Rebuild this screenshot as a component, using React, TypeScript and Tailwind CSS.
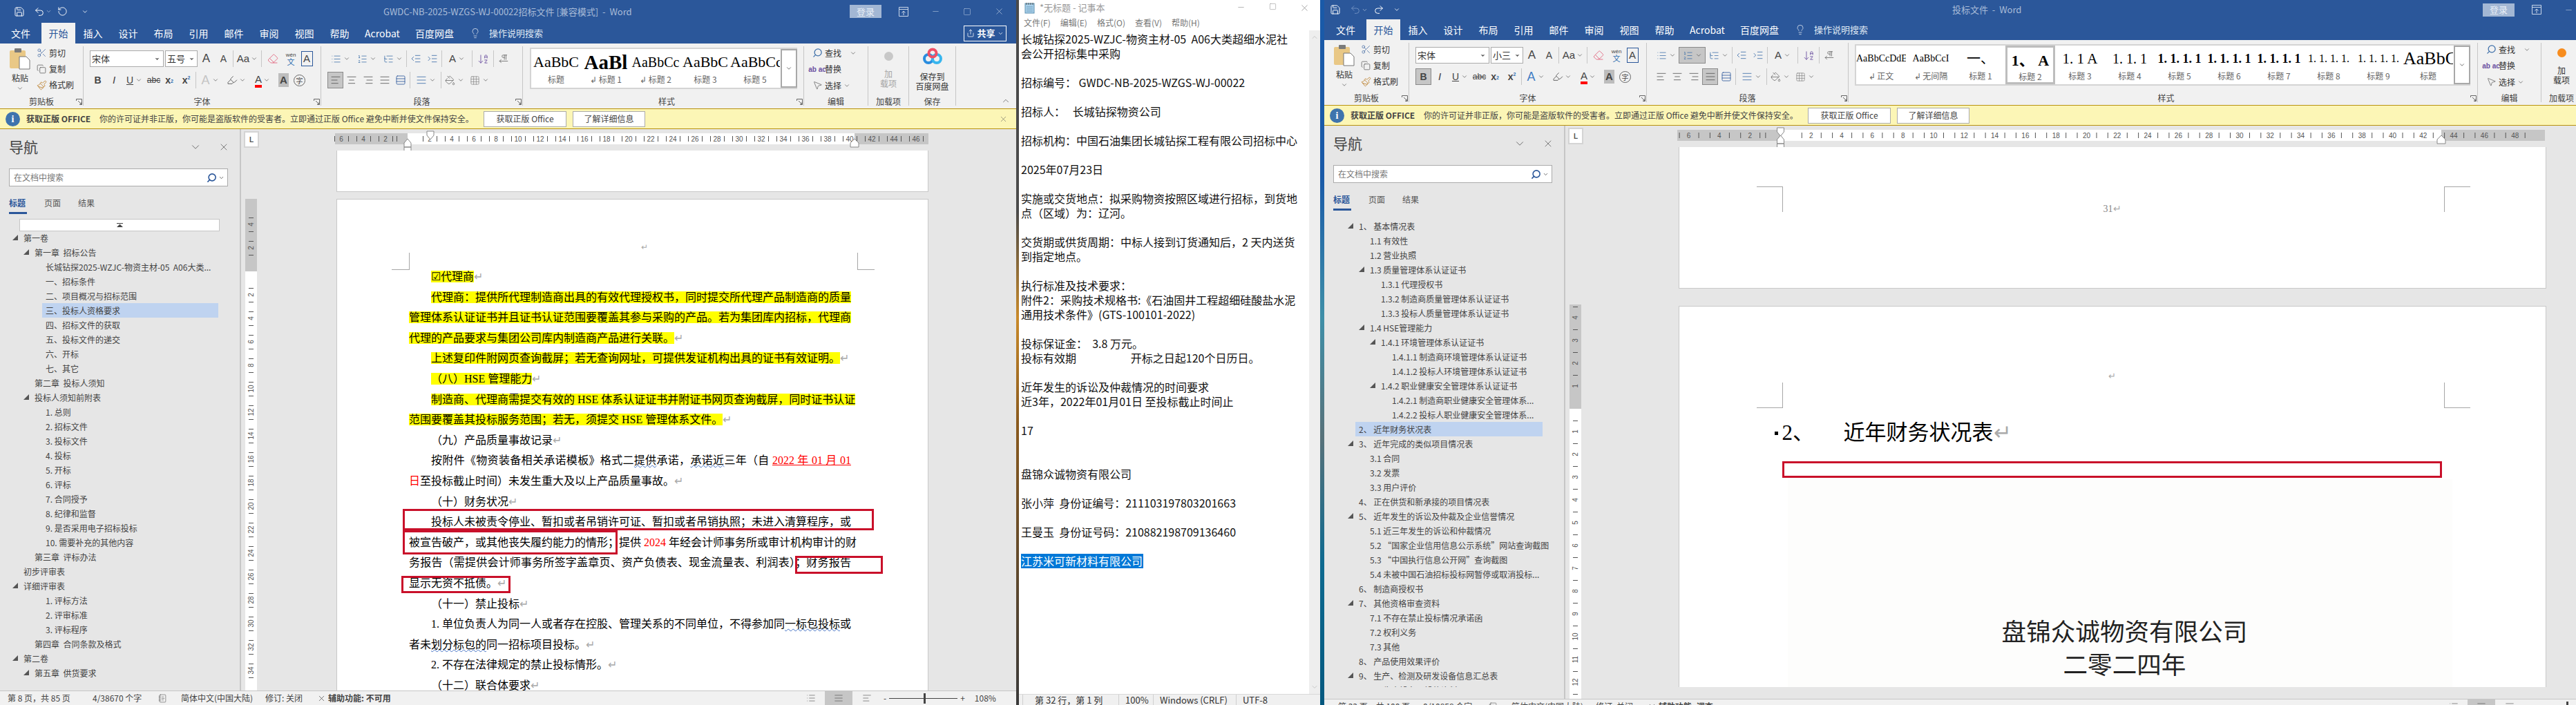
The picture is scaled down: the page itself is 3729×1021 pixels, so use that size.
import type { ReactNode } from "react";
import {
  AlignCenter,
  AlignJustify,
  AlignLeft,
  AlignRight,
  ArrowDownAZ,
  ChevronDown,
  ChevronUp,
  Copy,
  Eraser,
  Grid3x3,
  Highlighter,
  IndentDecrease,
  IndentIncrease,
  Lightbulb,
  List,
  ListOrdered,
  ListTree,
  Minus,
  MousePointer2,
  NotebookText,
  Paintbrush,
  PaintBucket,
  PilcrowLeft,
  Redo2,
  RotateCcw,
  Save,
  Scissors,
  Search,
  Share,
  Square,
  Undo2,
  Rows3,
  X,
} from "lucide-react";

const TABS = [
  ["文件", "w-[60px]"],
  ["开始", "w-[49px]"],
  ["插入", "w-[51px]"],
  ["设计", "w-[51px]"],
  ["布局", "w-[51px]"],
  ["引用", "w-[51px]"],
  ["邮件", "w-[51px]"],
  ["审阅", "w-[51px]"],
  ["视图", "w-[51px]"],
  ["帮助", "w-[51px]"],
  ["Acrobat", "w-[73px]"],
  ["百度网盘", "w-[78px]"],
];

type StyleItem = { preview: string; label: string; cls: string; active?: boolean };

const LEFT_STYLES: StyleItem[] = [
  { preview: "AaBbC", label: "标题", cls: "text-[22px]" },
  { preview: "AaBl", label: "↲ 标题 1", cls: "text-[29px] font-bold" },
  { preview: "AaBbCc", label: "↲ 标题 2", cls: "text-[20px]" },
  { preview: "AaBbC", label: "标题 3", cls: "text-[22px]" },
  { preview: "AaBbCc", label: "标题 5", cls: "text-[22px]" },
];

const RIGHT_STYLES: StyleItem[] = [
  { preview: "AaBbCcDdE", label: "↲ 正文", cls: "text-[14px]" },
  { preview: "AaBbCcI", label: "↲ 无间隔", cls: "text-[14px]" },
  { preview: "一、", label: "标题 1", cls: "text-[20px]" },
  { preview: "1、 A", label: "标题 2", cls: "text-[22px] font-bold", active: true },
  { preview: "1. 1  A", label: "标题 3", cls: "text-[21px]" },
  { preview: "1. 1. 1", label: "标题 4", cls: "text-[20px]" },
  { preview: "1. 1. 1. 1", label: "标题 5", cls: "text-[18px] font-bold" },
  { preview: "1. 1. 1. 1", label: "标题 6", cls: "text-[18px] font-bold" },
  { preview: "1. 1. 1. 1", label: "标题 7", cls: "text-[18px] font-bold" },
  { preview: "1. 1. 1. 1.", label: "标题 8", cls: "text-[16px]" },
  { preview: "1. 1. 1. 1.", label: "标题 9", cls: "text-[16px]" },
  { preview: "AaBbC", label: "标题", cls: "text-[26px]" },
];

type TreeRow = { text: string; level: 0 | 1 | 2 | 3 | 4; caret?: boolean; on?: boolean };

const LEFT_TREE: TreeRow[] = [
  { text: "第一卷", level: 0, caret: true },
  { text: "第一章  招标公告", level: 1, caret: true },
  { text: "长城钻探2025-WZJC-物资主材-05  A06大类...", level: 2 },
  { text: "一、招标条件", level: 2 },
  { text: "二、项目概况与招标范围", level: 2 },
  { text: "三、投标人资格要求", level: 2, on: true },
  { text: "四、招标文件的获取", level: 2 },
  { text: "五、投标文件的递交", level: 2 },
  { text: "六、开标", level: 2 },
  { text: "七、其它", level: 2 },
  { text: "第二章  投标人须知", level: 1 },
  { text: "投标人须知前附表", level: 1, caret: true },
  { text: "1. 总则", level: 2 },
  { text: "2. 招标文件", level: 2 },
  { text: "3. 投标文件", level: 2 },
  { text: "4. 投标", level: 2 },
  { text: "5. 开标", level: 2 },
  { text: "6. 评标", level: 2 },
  { text: "7. 合同授予", level: 2 },
  { text: "8. 纪律和监督", level: 2 },
  { text: "9. 是否采用电子招标投标", level: 2 },
  { text: "10. 需要补充的其他内容", level: 2 },
  { text: "第三章  评标办法", level: 1 },
  { text: "初步评审表", level: 0 },
  { text: "详细评审表", level: 0, caret: true },
  { text: "1. 评标方法", level: 2 },
  { text: "2. 评审标准", level: 2 },
  { text: "3. 评标程序", level: 2 },
  { text: "第四章  合同条款及格式", level: 1 },
  { text: "第二卷", level: 0, caret: true },
  { text: "第五章  供货要求", level: 1, caret: true },
];

const RIGHT_TREE: TreeRow[] = [
  { text: "1、 基本情况表", level: 1, caret: true },
  { text: "1.1 有效性", level: 2 },
  { text: "1.2 营业执照", level: 2 },
  { text: "1.3 质量管理体系认证证书", level: 2, caret: true },
  { text: "1.3.1 代理授权书", level: 3 },
  { text: "1.3.2 制造商质量管理体系认证证书", level: 3 },
  { text: "1.3.3 投标人质量管理体系认证证书", level: 3 },
  { text: "1.4 HSE管理能力", level: 2, caret: true },
  { text: "1.4.1 环境管理体系认证证书", level: 3, caret: true },
  { text: "1.4.1.1 制造商环境管理体系认证证书", level: 4 },
  { text: "1.4.1.2 投标人环境管理体系认证证书", level: 4 },
  { text: "1.4.2 职业健康安全管理体系认证证书", level: 3, caret: true },
  { text: "1.4.2.1 制造商职业健康安全管理体系...", level: 4 },
  { text: "1.4.2.2 投标人职业健康安全管理体系...", level: 4 },
  { text: "2、 近年财务状况表", level: 1, on: true },
  { text: "3、 近年完成的类似项目情况表", level: 1, caret: true },
  { text: "3.1 合同", level: 2 },
  { text: "3.2 发票", level: 2 },
  { text: "3.3 用户评价", level: 2 },
  { text: "4、 正在供货和新承接的项目情况表", level: 1 },
  { text: "5、 近年发生的诉讼及仲裁及企业信誉情况", level: 1, caret: true },
  { text: "5.1 近三年发生的诉讼和仲裁情况", level: 2 },
  { text: "5.2 “国家企业信用信息公示系统”网站查询截图", level: 2 },
  { text: "5.3 “中国执行信息公开网”查询截图", level: 2 },
  { text: "5.4 未被中国石油招标投标网暂停或取消投标...", level: 2 },
  { text: "6、 制造商授权书", level: 1 },
  { text: "7、 其他资格审查资料", level: 1, caret: true },
  { text: "7.1 不存在禁止投标情况承诺函", level: 2 },
  { text: "7.2 权利义务", level: 2 },
  { text: "7.3 其他", level: 2 },
  { text: "8、 产品使用效果评价", level: 1 },
  { text: "9、 生产、检测及研发设备信息汇总表", level: 1, caret: true },
  { text: "9.1 生产设备、设施资料", level: 2 },
];

const LEVEL_WIDTH = ["w-[29px]", "w-[45px]", "w-[61px]", "w-[77px]", "w-[93px]"];

const NOTEPAD_LINES = [
  "长城钻探2025-WZJC-物资主材-05  A06大类超细水泥社",
  "会公开招标集中采购",
  "",
  "招标编号： GWDC-NB-2025-WZGS-WJ-00022",
  "",
  "招标人：   长城钻探物资公司",
  "",
  "招标机构：中国石油集团长城钻探工程有限公司招标中心",
  "",
  "2025年07月23日",
  "",
  "实施或交货地点：拟采购物资按照区域进行招标，到货地",
  "点（区域）为：辽河。",
  "",
  "交货期或供货周期：中标人接到订货通知后，2 天内送货",
  "到指定地点。",
  "",
  "执行标准及技术要求：",
  "附件2：采购技术规格书:《石油固井工程超细硅酸盐水泥",
  "通用技术条件》(GTS-100101-2022)",
  "",
  "投标保证金：  3.8 万元。",
  "投标有效期                      开标之日起120个日历日。",
  "",
  "近年发生的诉讼及仲裁情况的时间要求",
  "近3年，2022年01月01日 至投标截止时间止",
  "",
  "17",
  "",
  "",
  "盘锦众诚物资有限公司",
  "",
  "张小萍  身份证编号：211103197803201663",
  "",
  "王曼玉  身份证号码：210882198709136460",
  "",
];

function Cell({ className = "", children }: { className?: string; children?: ReactNode }) {
  return <div className={`flex h-full shrink-0 items-center justify-center ${className}`}>{children}</div>;
}

function Chev() {
  return <ChevronDown size={10} strokeWidth={1.5} className="shrink-0 text-[#444]" />;
}

function Sep() {
  return <div className="mx-[1px] h-[24px] w-px shrink-0 bg-[#c6c6c6]" />;
}

function Launcher() {
  return (
    <svg width="9" height="9" viewBox="0 0 9 9" className="absolute right-[1px] bottom-[1px] text-[#666]">
      <path d="M0.5 3V0.5H8.5V8.5H5.5M3 3L8 8M8 5V8H5" fill="none" stroke="currentColor" />
    </svg>
  );
}

function Group({
  label,
  className,
  children,
  launcher = false,
}: {
  label: string;
  className: string;
  children: ReactNode;
  launcher?: boolean;
}) {
  return (
    <div className={`relative flex h-full shrink-0 flex-col border-r border-[#c6c6c6] ${className}`}>
      <div className="h-[70px] shrink-0">{children}</div>
      <div className="h-[16px] text-center text-[12px] leading-[20px] text-[#444]">{label}</div>
      {launcher && <Launcher />}
    </div>
  );
}

function SmallRow({ icon, text, after }: { icon: ReactNode; text: string; after?: ReactNode }) {
  return (
    <div className="flex h-[23.5px] items-center text-[12px] whitespace-nowrap text-[#333]">
      <Cell className="w-[18px]">{icon}</Cell>
      <span className="ml-[2px]">{text}</span>
      {after}
    </div>
  );
}

function PasteIcon() {
  return (
    <svg width="30" height="32" viewBox="0 0 30 32">
      <rect x="0" y="4" width="23" height="26" rx="2" fill="#e9c886" />
      <rect x="7" y="1" width="10" height="6" rx="1" fill="#7a7a7a" />
      <path d="M14 13H24L29 18V31H14Z" fill="#fff" stroke="#777" />
    </svg>
  );
}

function BaiduIcon() {
  return (
    <svg width="28" height="26" viewBox="0 0 28 26" fill="none">
      <circle cx="8" cy="16" r="6" stroke="#2a8ddf" strokeWidth="4" />
      <circle cx="20" cy="16" r="6" stroke="#38b6ee" strokeWidth="4" />
      <circle cx="14" cy="8" r="5.5" stroke="#ef4f66" strokeWidth="4" />
    </svg>
  );
}

function RibbonDisplayIcon() {
  return (
    <svg width="14" height="14" viewBox="0 0 14 14" fill="none" stroke="currentColor">
      <path d="M0.5 0.5H13.5V13.5H0.5ZM0.5 3.5H13.5M7 12V6M4.5 8.5L7 6L9.5 8.5" />
    </svg>
  );
}

function Ribbon({ right }: { right: boolean }) {
  const letter = "[font-family:'Liberation_Sans',sans-serif] text-[#444]";
  const smallIcon = "text-[#555]";
  const styles = right ? RIGHT_STYLES : LEFT_STYLES;
  return (
    <div className="flex h-[94px] shrink-0 bg-[#f1f1f1] py-[4px]">
      <Group label="剪贴板" className={right ? "w-[123px]" : "w-[121px]"} launcher>
        <div className="-mt-[2px] flex h-full">
          <div className="ml-[13px] flex w-[32px] shrink-0 flex-col items-center pt-[4px] text-[12px] text-[#333]">
            <PasteIcon />
            <span className="mt-[3px]">粘贴</span>
            <span className="mt-[1px]">
              <Chev />
            </span>
          </div>
          <div className="ml-[6px] flex flex-col">
            <SmallRow icon={<Scissors size={15} strokeWidth={1.25} className="text-[#4a6fa5]" />} text="剪切" />
            <SmallRow icon={<Copy size={14} strokeWidth={1.25} className={smallIcon} />} text="复制" />
            <SmallRow icon={<Paintbrush size={15} strokeWidth={1.5} className="text-[#c08a3e]" />} text="格式刷" />
          </div>
        </div>
      </Group>

      <Group label="字体" className="w-[344px]" launcher>
        <div className="flex flex-col gap-[7px] pt-[6px]">
          <div className="flex h-[24px] items-center pl-[9px]">
            <div className="flex h-[24px] w-[107px] shrink-0 items-center justify-between border border-[#ababab] bg-white px-[2px] text-[13px] text-[#333]">
              宋体
              <ChevronDown size={9} className="mr-[2px] fill-[#555] text-[#555]" />
            </div>
            <div className="ml-[2px] flex h-[24px] w-[47px] shrink-0 items-center justify-between border border-[#ababab] bg-white px-[2px] text-[13px] text-[#333]">
              {right ? "小三" : "五号"}
              <ChevronDown size={9} className="mr-[1px] fill-[#555] text-[#555]" />
            </div>
            <Cell className={`w-[25px] text-[17px] ${letter}`}>A</Cell>
            <Cell className={`w-[25px] text-[14px] ${letter}`}>A</Cell>
            <Sep />
            <Cell className={`w-[38px] gap-[2px] text-[15px] ${letter}`}>
              Aa
              <Chev />
            </Cell>
            <Sep />
            <Cell className="w-[30px]">
              <Eraser size={16} strokeWidth={1.5} className="text-[#e4738a]" />
            </Cell>
            <Cell className="w-[22px] flex-col text-[8px] leading-[9px] text-[#444]">
              <span className="[font-family:'Liberation_Sans',sans-serif]">wén</span>
              <span className="text-[11px] leading-[11px] text-[#2f6fb0]">文</span>
            </Cell>
            <Cell className="w-[24px]">
              <span className={`flex h-[22px] w-[17px] items-center justify-center border border-[#2b579a] text-[15px] ${letter}`}>A</span>
            </Cell>
          </div>
          <div className="flex h-[24px] items-center pl-[9px]">
            <div className={`flex h-[24px] w-[23px] shrink-0 items-center justify-center text-[14px] font-bold ${letter} ${right ? "border border-[#8a8a8a] bg-[#c6c6c6]" : ""}`}>
              B
            </div>
            <Cell className={`w-[24px] text-[15px] italic ${letter}`}>I</Cell>
            <Cell className={`w-[35px] gap-[3px] text-[14px] underline ${letter}`}>
              U
              <Chev />
            </Cell>
            <Cell className={`w-[21px] text-[12px] line-through ${letter}`}>abc</Cell>
            <Cell className={`w-[24px] text-[14px] font-bold ${letter}`}>
              x<sub className="text-[7px] text-[#2f6fb0]">2</sub>
            </Cell>
            <Cell className={`w-[25px] text-[14px] font-bold ${letter}`}>
              x<sup className="text-[7px] text-[#2f6fb0]">2</sup>
            </Cell>
            <Sep />
            <Cell className={`w-[38px] gap-[3px] text-[18px] ${right ? "text-[#3f7cc4]" : "text-[#c4c4c4]"} [font-family:'Liberation_Sans',sans-serif]`}>
              A
              <Chev />
            </Cell>
            <Cell className="w-[38px] gap-[2px]">
              <Highlighter size={16} strokeWidth={1.5} className="text-[#666]" />
              <Chev />
            </Cell>
            <Cell className="w-[38px] gap-[2px]">
              <span className={`border-b-[4px] border-[#f00] text-[15px] leading-[17px] ${letter}`}>A</span>
              <Chev />
            </Cell>
            <Cell className="w-[23px]">
              <span className={`flex h-[20px] w-[15px] items-center justify-center bg-[#bdbdbd] text-[15px] font-bold ${letter}`}>A</span>
            </Cell>
            <Cell className="w-[23px]">
              <span className="flex h-[17px] w-[17px] items-center justify-center rounded-full border border-[#666] text-[10px] text-[#444]">字</span>
            </Cell>
          </div>
        </div>
      </Group>

      <Group label="段落" className="w-[292px]" launcher>
        <div className="flex flex-col gap-[7px] pt-[6px]">
          <div className="flex h-[24px] items-center pl-[9px]">
            <Cell className="w-[37px] gap-[3px]">
              <List size={15} strokeWidth={1.25} className="text-[#3c6ea8]" />
              <Chev />
            </Cell>
            <Cell className={`w-[39px] gap-[3px] ${right ? "border border-[#8a8a8a] bg-[#c6c6c6]" : ""}`}>
              <ListOrdered size={15} strokeWidth={1.25} className="text-[#3c6ea8]" />
              <Chev />
            </Cell>
            <Cell className="w-[37px] gap-[3px]">
              <ListTree size={15} strokeWidth={1.25} className="text-[#3c6ea8]" />
              <Chev />
            </Cell>
            <Sep />
            <Cell className="w-[24px]">
              <IndentDecrease size={16} strokeWidth={1.25} className="text-[#3c6ea8]" />
            </Cell>
            <Cell className="w-[24px]">
              <IndentIncrease size={16} strokeWidth={1.25} className="text-[#3c6ea8]" />
            </Cell>
            <Sep />
            <Cell className={`w-[41px] gap-[3px] text-[15px] ${letter}`}>
              A
              <Chev />
            </Cell>
            <Sep />
            <Cell className="w-[28px]">
              <ArrowDownAZ size={17} strokeWidth={1.25} className="text-[#6a4fa0]" />
            </Cell>
            <Sep />
            <Cell className="w-[26px]">
              <PilcrowLeft size={14} strokeWidth={1.25} className="text-[#555]" />
            </Cell>
          </div>
          <div className="flex h-[24px] items-center pl-[9px]">
            <Cell className={`w-[23px] ${right ? "" : "border border-[#8a8a8a] bg-[#c6c6c6]"}`}>
              <AlignLeft size={16} strokeWidth={1.25} className="text-[#555]" />
            </Cell>
            <Cell className="w-[24px]">
              <AlignCenter size={16} strokeWidth={1.25} className="text-[#555]" />
            </Cell>
            <Cell className="w-[24px]">
              <AlignRight size={16} strokeWidth={1.25} className="text-[#555]" />
            </Cell>
            <Cell className={`w-[23px] ${right ? "border border-[#8a8a8a] bg-[#c6c6c6]" : ""}`}>
              <AlignJustify size={16} strokeWidth={1.25} className="text-[#555]" />
            </Cell>
            <Cell className="w-[24px]">
              <Rows3 size={16} strokeWidth={1.25} className="text-[#2b579a]" />
            </Cell>
            <Sep />
            <Cell className="w-[42px] gap-[3px]">
              <AlignJustify size={16} strokeWidth={1.25} className="text-[#3c6ea8]" />
              <Chev />
            </Cell>
            <Sep />
            <Cell className="w-[36px] gap-[3px]">
              <PaintBucket size={15} strokeWidth={1.25} className="text-[#666]" />
              <Chev />
            </Cell>
            <Cell className="w-[36px] gap-[3px]">
              <Grid3x3 size={15} strokeWidth={1} className="text-[#777]" />
              <Chev />
            </Cell>
          </div>
        </div>
      </Group>

      <Group label="样式" className={right ? "w-[911px] pl-[9px]" : "w-[407px] pl-[10px]"} launcher>
        <div className={`mt-[2px] flex h-[60px] border-y-2 border-l-2 border-[#d4d4d4] bg-white ${right ? "w-[891px]" : "w-[387px]"}`}>
          {styles.map((s) => (
            <div
              key={s.label}
              className={`flex h-full w-[72px] shrink-0 flex-col items-center overflow-hidden pt-[5px] ${s.active ? "border-[3px] border-[#bdbdbd]" : ""}`}
            >
              <div className={`h-[28px] w-full overflow-hidden text-center leading-[28px] whitespace-nowrap text-black [font-family:'Liberation_Serif','Noto_Sans_CJK_SC',serif] ${s.cls}`}>
                {s.preview}
              </div>
              <div className="mt-[3px] text-[12px] leading-[16px] whitespace-nowrap text-[#666]">{s.label}</div>
            </div>
          ))}
          <div className="ml-auto flex w-[24px] shrink-0 items-center justify-center border-2 border-[#a8a8a8] text-[#555]">
            <ChevronDown size={10} />
          </div>
        </div>
      </Group>

      <Group label="编辑" className={right ? "w-[92px]" : "w-[93px]"}>
        <div className="-mt-[2px] flex flex-col pl-[10px]">
          <SmallRow
            icon={<Search size={15} strokeWidth={2} className="-scale-x-100 text-[#3c6ea8]" />}
            text="查找"
            after={
              <span className="ml-[12px]">
                <Chev />
              </span>
            }
          />
          <SmallRow
            icon={<span className="text-[10px] leading-[9px] font-bold text-[#6a4fa0] [font-family:'Liberation_Sans',sans-serif]">ab ac</span>}
            text="替换"
          />
          <SmallRow
            icon={<MousePointer2 size={15} strokeWidth={1.25} className="text-[#666]" />}
            text="选择"
            after={
              <span className="ml-[3px]">
                <Chev />
              </span>
            }
          />
        </div>
      </Group>

      <Group label="加载项" className="w-[59px]">
        <div className={`flex flex-col items-center pt-[8px] text-[12px] leading-[14px] ${right ? "text-[#333]" : "text-[#a6a6a6]"}`}>
          <div className={`h-[13px] w-[13px] rounded-full ${right ? "bg-[#f78c1e]" : "bg-[#c8c8c8]"}`} />
          <span className="mt-[12px]">加</span>
          <span>载项</span>
        </div>
      </Group>

      <Group label="保存" className="w-[68px]">
        <div className="flex flex-col items-center pt-[2px] text-[12px] leading-[14px] text-[#333]">
          <BaiduIcon />
          <span className="mt-[9px]">保存到</span>
          <span>百度网盘</span>
        </div>
      </Group>

      <div className="flex flex-1 items-end justify-end pr-[8px] text-[#555]">
        <ChevronUp size={14} strokeWidth={1.25} />
      </div>
    </div>
  );
}

function TitleBar({ right, title }: { right: boolean; title: string }) {
  return (
    <div className={`flex shrink-0 items-center text-white ${right ? "h-[28px]" : "h-[33px]"}`}>
      <div className={`flex w-[140px] shrink-0 items-center ${right ? "pl-[8px]" : "pl-[20px]"}`}>
        <Save size={16} strokeWidth={1.5} />
        <Undo2 size={16} strokeWidth={1.5} className={`ml-[13px] ${right ? "text-[#6f8fc0]" : ""}`} />
        <ChevronDown size={9} className="ml-[1px] text-[#a9bcd8]" />
        {right ? <Redo2 size={16} strokeWidth={1.5} className="ml-[8px]" /> : <RotateCcw size={15} strokeWidth={1.5} className="ml-[8px]" />}
        <ChevronDown size={10} strokeWidth={2} className={right ? "ml-[13px]" : "ml-[20px]"} />
      </div>
      <div className={`flex-1 text-[13px] whitespace-pre text-[#a9bcd8] ${right ? "pl-[769px]" : "pl-[415px]"}`}>{title}</div>
      <div className="flex w-[241px] shrink-0 items-center text-[#c9d6e8]">
        <div className="flex h-[19px] w-[46px] items-center justify-center bg-[#a3b7d4] text-[13px] text-[#e9eff7]">登录</div>
        <Cell className="ml-[9px] w-[46px]">
          <RibbonDisplayIcon />
        </Cell>
        <Cell className="w-[46px]">
          <Minus size={13} strokeWidth={1} />
        </Cell>
        <Cell className="w-[46px]">
          <Square size={12} strokeWidth={1} />
        </Cell>
        <Cell className="w-[46px]">
          <X size={15} strokeWidth={1} />
        </Cell>
      </div>
    </div>
  );
}

function TabRow({ right }: { right: boolean }) {
  return (
    <div className={`flex h-[30px] shrink-0 items-center text-[14px] text-white ${right ? "pl-[1px]" : ""}`}>
      {TABS.map(([name, width]) => (
        <div
          key={name}
          className={`flex h-full shrink-0 items-center justify-center ${width} ${name === "开始" ? "bg-[#f1f1f1] text-[#2b579a]" : ""}`}
        >
          {name}
        </div>
      ))}
      <Lightbulb size={16} strokeWidth={1} className="ml-[12px] shrink-0" />
      <span className="ml-[12px] text-[13px] whitespace-nowrap text-[#dfe7f2]">操作说明搜索</span>
      {!right && (
        <div className="ml-auto mr-[14px] flex h-[23px] w-[62px] items-center justify-center gap-[3px] border border-white text-[13px] font-bold">
          <Share size={12} strokeWidth={1.5} />
          共享
          <ChevronDown size={9} />
        </div>
      )}
    </div>
  );
}

function LicenseBar() {
  return (
    <div className="flex h-[30px] shrink-0 items-center border-y border-[#b8920f] bg-[#fcf6b6] pl-[8px] text-[12px] text-[#444]">
      <div className="flex h-[21px] w-[21px] shrink-0 items-center justify-center rounded-full bg-[#3f74ad] text-[14px] font-bold text-white [font-family:'Liberation_Serif',serif]">
        i
      </div>
      <div className="ml-[9px] w-[96px] shrink-0 font-bold whitespace-nowrap">获取正版 OFFICE</div>
      <div className="ml-[10px] w-[540px] shrink-0 whitespace-nowrap">你的许可证并非正版，你可能是盗版软件的受害者。立即通过正版 Office 避免中断并使文件保持安全。</div>
      <div className="ml-[16px] flex h-[23px] w-[120px] shrink-0 items-center justify-center border border-[#ababab] bg-white">获取正版 Office</div>
      <div className="ml-[9px] flex h-[23px] w-[105px] shrink-0 items-center justify-center border border-[#ababab] bg-white">了解详细信息</div>
      <div className="ml-auto mr-[12px] text-[#555]">
        <X size={13} strokeWidth={1} />
      </div>
    </div>
  );
}

function NavPane({ tree, right }: { tree: TreeRow[]; right: boolean }) {
  return (
    <div className={`flex w-[349px] shrink-0 flex-col overflow-hidden border-r-2 border-[#c6c6c6] ${right ? "pb-[17px]" : ""}`}>
      <div className="flex h-[46px] shrink-0 items-center pt-[6px] pl-[13px] text-[#444]">
        <span className="text-[21px]">导航</span>
        <ChevronDown size={18} strokeWidth={1} className="ml-[219px]" />
        <X size={16} strokeWidth={1} className="ml-[24px]" />
      </div>
      <div className="mt-[11px] ml-[13px] flex h-[26px] w-[317px] shrink-0 items-center border border-[#ababab] bg-white pr-[4px] pl-[6px] text-[12px] text-[#777]">
        在文档中搜索
        <Search size={15} strokeWidth={2.5} className="ml-auto -scale-x-100 text-[#2b579a]" />
        <ChevronDown size={9} className="ml-[2px] text-[#444]" />
      </div>
      <div className="mt-[9px] ml-[13px] flex h-[31px] shrink-0 items-start gap-[25px] text-[12px] leading-[30px] text-[#555]">
        <span className="h-[31px] w-[26px] border-b-[3px] border-[#2b579a] font-bold text-[#2b579a]">标题</span>
        <span>页面</span>
        <span>结果</span>
      </div>
      {right ? (
        <div className="h-[11.5px] shrink-0" />
      ) : (
        <div className="mt-[7px] ml-[28px] flex h-[18px] w-[290px] shrink-0 items-center justify-center border border-[#c6c6c6] bg-white">
          <svg width="9" height="6" viewBox="0 0 9 6">
            <path d="M0 0H9V1H0ZM4.5 1.5L9 6H0Z" fill="#444" />
          </svg>
        </div>
      )}
      <div className={`flex-1 overflow-hidden text-[12px] leading-[21px] text-[#444] ${right ? "" : "-mt-[1.5px]"}`}>
        {tree.map((row) => (
          <div key={row.text} className="flex h-[21px] whitespace-pre">
            <div className={`flex shrink-0 items-center justify-end pr-[3px] ${LEVEL_WIDTH[row.level]}`}>
              {row.caret && (
                <svg width="8" height="8" viewBox="0 0 8 8">
                  <path d="M8 0V8H0Z" fill="#555" />
                </svg>
              )}
            </div>
            <div className={`mr-[31px] flex-1 pl-[5px] ${row.on ? "bg-[#bfd3f0]" : ""}`}>{row.text}</div>
          </div>
        ))}
      </div>
    </div>
  );
}

function HRuler({
  zero,
  step,
  tick,
  white,
  total,
  labels,
  first,
}: {
  zero: number;
  step: number;
  tick: number;
  white: number;
  total: number;
  labels: number;
  first: number;
}) {
  const marks: { x: number; text: number }[] = [];
  for (let i = -3; i <= labels; i++) {
    if (i !== 0) marks.push({ x: zero + i * step, text: Math.abs(i) * 2 });
  }
  return (
    <svg width={total} height="26" viewBox={`0 0 ${total} 26`} className="block shrink-0 overflow-visible">
      <rect width={total} height="16" fill="#c6c6c6" />
      <rect x={zero} width={white - zero} height="16" fill="#fff" />
      {marks.map((m) => (
        <g key={m.x} fill="#555">
          <rect x={m.x - tick} y="4" width="1" height="8" />
          <rect x={m.x + tick} y="4" width="1" height="8" />
          <text x={m.x} y="12" fontSize="10" textAnchor="middle" fontFamily="Liberation Sans">
            {m.text}
          </text>
        </g>
      ))}
      <rect x={zero - step / 2} y="4" width="1" height="8" fill="#555" />
      <path d={`M${first - 5} -3H${first + 5}V3L${first} 9L${first - 5} 3Z`} fill="#fff" stroke="#888" />
      <path d={`M${zero} 8L${zero + 5} 14V20H${zero - 5}V14ZM${zero - 5} 20H${zero + 5}V26H${zero - 5}Z`} fill="#fff" stroke="#888" />
      <path d={`M${white} 8L${white + 6} 14V20H${white - 6}V14Z`} fill="#fff" stroke="#888" />
    </svg>
  );
}

function VRuler({
  zero,
  step,
  inc,
  above,
  below,
  ticks,
  height,
}: {
  zero: number;
  step: number;
  inc: number;
  above: number;
  below: number;
  ticks: number[];
  height: number;
}) {
  const marks: { y: number; text: number }[] = [];
  for (let i = -above; i <= below; i++) {
    if (i !== 0) marks.push({ y: zero + i * step, text: Math.abs(i) * inc });
  }
  return (
    <svg width="17" height={height} viewBox={`0 0 17 ${height}`} className="block">
      <rect width="17" height={height} fill="#fff" />
      <rect width="17" height={zero} fill="#c6c6c6" />
      {marks.map((m) => (
        <g key={m.y} fill="#555">
          {ticks.map((t) => (
            <rect key={t} x="5" y={m.y + t} width="7" height="1" />
          ))}
          <text x="8.5" y={m.y + 3.5} fontSize="10" textAnchor="middle" fontFamily="Liberation Sans" transform={`rotate(-90 8.5 ${m.y})`}>
            {m.text}
          </text>
        </g>
      ))}
    </svg>
  );
}

function Mark({ className }: { className: string }) {
  return <div className={`absolute border-[#a6a6a6] ${className}`} />;
}

function RedBox({ className }: { className: string }) {
  return <div className={`absolute border-[3.5px] border-[#c9102a] ${className}`} />;
}

const RET = <span className="text-[#aaa]">↵</span>;

function Line({ indent, full, mark, children }: { indent?: boolean; full?: boolean; mark?: boolean; children: ReactNode }) {
  return (
    <p className={`h-[29.6px] w-[640px] leading-[29.6px] whitespace-nowrap ${indent ? "pl-[32px]" : ""} ${full ? "[text-align-last:justify]" : ""}`}>
      {children}
      {mark && RET}
    </p>
  );
}

function Hl({ children }: { children: ReactNode }) {
  return <span className="bg-[#ffff00]">{children}</span>;
}

function Wavy({ children }: { children: ReactNode }) {
  return <span className="underline decoration-[#4472c4] decoration-wavy decoration-1">{children}</span>;
}

function Red({ children, u }: { children: ReactNode; u?: boolean }) {
  return <span className={`text-[#f00] ${u ? "underline" : ""}`}>{children}</span>;
}

function LeftPages() {
  return (
    <div className="ml-[2px] flex-1 overflow-hidden">
      <div className="h-[60px] w-[857px] border-x border-b border-[#c8c8c8] bg-white" />
      <div className="relative mt-[10px] h-[800px] w-[857px] border border-[#c8c8c8] bg-white pt-[97px] pl-[104px] text-[16px] text-black [font-family:'Liberation_Serif','Noto_Sans_CJK_SC',serif]">
        <Mark className="top-[77px] left-[79px] h-[25px] w-[26px] border-r border-b" />
        <Mark className="top-[77px] left-[753px] h-[25px] w-[25px] border-b border-l" />
        <div className="absolute top-[60px] left-[440px] text-[12px]">{RET}</div>
        <Line indent mark><Hl>☑代理商</Hl></Line>
        <Line indent full><Hl>代理商：提供所代理制造商出具的有效代理授权书，同时提交所代理产品制造商的质量</Hl></Line>
        <Line full><Hl>管理体系认证证书并且证书认证范围要覆盖其参与采购的产品。若为集团库内招标，代理商</Hl></Line>
        <Line mark><Hl>代理的产品要求与集团公司库内制造商产品进行关联。</Hl></Line>
        <Line indent mark><Hl>上述复印件附网页查询截屏；若无查询网址，可提供发证机构出具的证书有效证明。</Hl></Line>
        <Line indent mark><Hl>（八）HSE 管理能力</Hl></Line>
        <Line indent full><Hl>制造商、代理商需提交有效的 HSE 体系认证证书并附证书网页查询截屏，同时证书认证</Hl></Line>
        <Line mark><Hl>范围要覆盖其投标服务范围；若无，须提交 HSE 管理体系文件。</Hl></Line>
        <Line indent mark>（九）产品质量事故记录</Line>
        <Line indent full>
          按附件《物资装备相关承诺模板》格式二<Wavy>提供</Wavy>承诺，<Wavy>承诺近</Wavy>三年（自 <Red u>2022 年 01 月 01</Red>
        </Line>
        <Line mark><Red>日</Red>至投标截止时间）未发生重大及以上产品质量事故。</Line>
        <Line indent mark>（十）财务状况</Line>
        <Line indent full>投标人未被责令停业、暂扣或者吊销许可证、暂扣或者吊销执照；未进入清算程序，或</Line>
        <Line full>被宣告破产，或其他丧失履约能力的情形；提供 <Red>2024</Red> 年经会计师事务所或审计机构审计的财</Line>
        <Line full>务报告（需提供会计师事务所签字盖章页、资产负债表、现金流量表、利润表）；财务报告</Line>
        <Line mark>显示无资不抵债。</Line>
        <Line indent mark>（十一）禁止投标</Line>
        <Line indent full>1. 单位负责人为同一人或者存在控股、管理关系的不同单位，不得参加同<Wavy>一标包投标</Wavy>或</Line>
        <Line mark>者未<Wavy>划分标包的</Wavy>同一招标项目投标。</Line>
        <Line indent mark>2. 不存在法律规定的禁止投标情形。</Line>
        <Line indent mark>（十二）联合体要求</Line>
        <RedBox className="top-[448px] left-[95px] h-[31px] w-[682px]" />
        <RedBox className="top-[479px] left-[95px] h-[35px] w-[311px]" />
        <RedBox className="top-[516px] left-[663px] h-[26px] w-[127px]" />
        <RedBox className="top-[545px] left-[93px] h-[25px] w-[158px]" />
      </div>
    </div>
  );
}

function RightPages() {
  return (
    <div className="ml-[1.5px] mb-[17px] flex-1 overflow-hidden">
      <div className="relative h-[205px] w-[1256px] border-x border-b border-[#c8c8c8] bg-white pt-[78px] text-center text-[14px] leading-[24px] text-[#888] [font-family:'Liberation_Serif',serif]">
        <Mark className="top-[57px] left-[112px] h-[37px] w-[38px] border-t border-r" />
        <Mark className="top-[57px] left-[1107px] h-[37px] w-[38px] border-t border-l" />
        31{RET}
      </div>
      <div className="relative mt-[25px] h-[600px] w-[1256px] border border-[#c8c8c8] bg-white pt-[91px] text-black [font-family:'Liberation_Serif','Noto_Sans_CJK_SC',serif]">
        <Mark className="top-[110px] left-[112px] h-[37px] w-[38px] border-r border-b" />
        <Mark className="top-[110px] left-[1107px] h-[37px] w-[38px] border-b border-l" />
        <div className="h-[20px] text-center text-[13px] leading-[20px]">{RET}</div>
        <div className="relative mt-[54px] flex h-[36px] pl-[149px] text-[31px] leading-[36px]">
          <div className="absolute top-[16px] left-[138px] h-[5px] w-[5px] bg-black" />
          <span className="w-[89px]">2、</span>
          <span>近年财务状况表</span>
          {RET}
        </div>
        <RedBox className="top-[224px] left-[149px] h-[24px] w-[955px]" />
        <div className="mt-[49px] ml-[157px] h-[400px] w-[962px] bg-[#fdfdfc] pt-[198px] pl-[14px] text-center text-[35.6px] leading-[48px] text-[#222]">
          <div>盘锦众诚物资有限公司</div>
          <div>二零二四年</div>
        </div>
      </div>
    </div>
  );
}

function StatusBar({ right, left }: { right: boolean; left: string[] }) {
  return (
    <div className="flex h-[21px] shrink-0 items-center overflow-hidden border-t border-[#c6c6c6] bg-[#f1f1f1] text-[12px] whitespace-nowrap text-[#444]">
      <span className={`${right ? "ml-[20px]" : "ml-[11px]"} w-[123px]`}>{left[0]}</span>
      <span className="w-[85px]">{left[1]}</span>
      <NotebookText size={13} strokeWidth={1} className="mr-[20px] ml-[10px]" />
      <span className="w-[122px]">简体中文(中国大陆)</span>
      <span className="w-[75px]">修订: 关闭</span>
      <X size={13} strokeWidth={1.25} className="mr-[3px]" />
      <span className="font-bold">辅助功能: {left[2]}</span>
      <div className={`ml-auto flex h-full shrink-0 items-center ${right ? "-mr-[14px] w-[298px]" : "w-[298px]"}`}>
        <List size={14} strokeWidth={1} className="mr-[13px] ml-[-6px]" />
        <div className="flex h-full w-[40px] items-center justify-center bg-[#c6c6c6]">
          <AlignJustify size={14} strokeWidth={1} />
        </div>
        <AlignLeft size={14} strokeWidth={1} className="ml-[14px]" />
        <span className="ml-[17px]">-</span>
        <div className="relative mx-[4px] h-px w-[99px] bg-[#444]">
          <div className="absolute -top-[7px] left-[50px] h-[15px] w-[3px] bg-[#444]" />
        </div>
        <span>+</span>
        <span className="ml-[14px]">108%</span>
      </div>
    </div>
  );
}

function WordWindow({
  right,
  title,
  tree,
  status,
  children,
  hruler,
  vruler,
}: {
  right: boolean;
  title: string;
  tree: TreeRow[];
  status: string[];
  children: ReactNode;
  hruler: ReactNode;
  vruler: ReactNode;
}) {
  return (
    <div className={`flex shrink-0 flex-col bg-[#2b579a] ${right ? "h-[1033px] w-[1918px]" : "h-[1021px] w-[1471px]"}`}>
      <TitleBar right={right} title={title} />
      <TabRow right={right} />
      <Ribbon right={right} />
      <LicenseBar />
      <div className="flex min-h-0 flex-1 bg-[#e6e6e6]">
        <NavPane tree={tree} right={right} />
        <div className={`flex shrink-0 flex-col overflow-hidden ${right ? "w-[162px]" : "w-[136px]"}`}>
          <div className="mt-[3px] ml-[4px] flex h-[24px] w-[22px] shrink-0 items-center justify-center border-2 border-[#d4d4d4] bg-white text-[10px] font-bold text-[#555] [font-family:'Liberation_Sans',sans-serif]">
            L
          </div>
          {vruler}
        </div>
        <div className="flex min-w-0 flex-1 flex-col">
          <div className="mt-[6px] mb-[9px] h-[16px] shrink-0">{hruler}</div>
          {children}
        </div>
      </div>
      <StatusBar right={right} left={status} />
    </div>
  );
}

function Notepad() {
  return (
    <div className="flex h-full w-[436px] shrink-0 flex-col bg-white">
      <div className="flex h-[22px] shrink-0 items-center pl-[8px] text-[13px] text-[#999]">
        <svg width="16" height="17" viewBox="0 0 16 17">
          <rect x="1" y="2" width="13" height="14" fill="#a8d0ea" stroke="#5b8fb0" />
          <path d="M3 1V4M6 1V4M9 1V4M12 1V4" stroke="#555" />
          <path d="M3 7H12M3 10H12M3 13H12" stroke="#6f9cbb" />
        </svg>
        <span className="ml-[6px]">*无标题 - 记事本</span>
        <div className="ml-auto flex text-[#777]">
          <Cell className="w-[46px]">
            <Minus size={13} strokeWidth={1} />
          </Cell>
          <Cell className="w-[46px]">
            <Square size={11} strokeWidth={1} />
          </Cell>
          <Cell className="w-[46px]">
            <X size={15} strokeWidth={1} />
          </Cell>
        </div>
      </div>
      <div className="flex h-[22px] shrink-0 items-center gap-[14px] pl-[7px] text-[12px] text-[#777]">
        <span>文件(F)</span>
        <span>编辑(E)</span>
        <span>格式(O)</span>
        <span>查看(V)</span>
        <span>帮助(H)</span>
      </div>
      <div className="flex min-h-0 flex-1">
        <div className="flex-1 overflow-hidden pt-[2px] pl-[3px] text-[16px] leading-[21px] whitespace-pre text-[#111]">
          {NOTEPAD_LINES.map((line, i) => (
            <div key={i} className="h-[21px]">
              {line}
            </div>
          ))}
          <div className="h-[21px] w-[177px] bg-[#0078d7] text-white">江苏米可新材料有限公司</div>
        </div>
        <div className="flex w-[16px] shrink-0 flex-col items-center justify-between bg-[#eeeeee] py-[4px] text-[#c8c8c8]">
          <ChevronUp size={12} strokeWidth={2} />
          <ChevronDown size={12} strokeWidth={2} />
        </div>
      </div>
      <div className="flex h-[16px] shrink-0 items-center border-t border-[#d9d9d9] bg-[#f0f0f0] text-[13px] whitespace-nowrap text-[#333]">
        <span className="ml-[5px] h-full w-[140px] border-x border-[#d0d0d0] pl-[17px] leading-[16px]">第 32 行，第 1 列</span>
        <span className="h-full w-[50px] border-r border-[#d0d0d0] pl-[9px] leading-[16px]">100%</span>
        <span className="h-full w-[120px] border-r border-[#d0d0d0] pl-[9px] leading-[16px]">Windows (CRLF)</span>
        <span className="pl-[9px] leading-[16px]">UTF-8</span>
      </div>
    </div>
  );
}

export default function App() {
  return (
    <div className="flex h-[1021px] w-[3729px] overflow-hidden bg-[#1a5690] [font-family:'Noto_Sans_CJK_SC','Liberation_Sans',sans-serif]">
      <WordWindow
        right={false}
        title="GWDC-NB-2025-WZGS-WJ-00022招标文件 [兼容模式]  -  Word"
        tree={LEFT_TREE}
        status={["第 8 页，共 85 页", "4/38670 个字", "不可用"]}
        hruler={<HRuler zero={105} step={32} tick={10} white={752} total={859} labels={23} first={138} />}
        vruler={
          <div className="mt-[74px] ml-[6px] shrink-0">
            <VRuler zero={105} step={34} inc={2} above={2} below={17} ticks={[-10, 10]} height={712} />
          </div>
        }
      >
        <LeftPages />
      </WordWindow>
      <div className="h-full w-[4px] shrink-0 bg-[linear-gradient(180deg,#4a4a4a_0%,#4a4a4a_30%,#c98a2a_45%,#8a5a1e_60%,#3a3a3a_100%)]" />
      <Notepad />
      <div className="h-full w-[6px] shrink-0 bg-[linear-gradient(180deg,#1a5aa8_0%,#1a5aa8_25%,#3f8fa8_45%,#58727a_62%,#0e6a90_80%,#05587f_100%)]" />
      <WordWindow
        right
        title="投标文件  -  Word"
        tree={RIGHT_TREE}
        status={["第 33 页，共 100 页", "0/10858 个字", "调查"]}
        hruler={<HRuler zero={149.5} step={44.3} tick={14} white={1106} total={1256} labels={24} first={149.5} />}
        vruler={
          <div className="mt-[232px] ml-[6px] shrink-0">
            <VRuler zero={151} step={33} inc={1} above={4} below={13} ticks={[-16]} height={590} />
          </div>
        }
      >
        <RightPages />
      </WordWindow>
    </div>
  );
}
